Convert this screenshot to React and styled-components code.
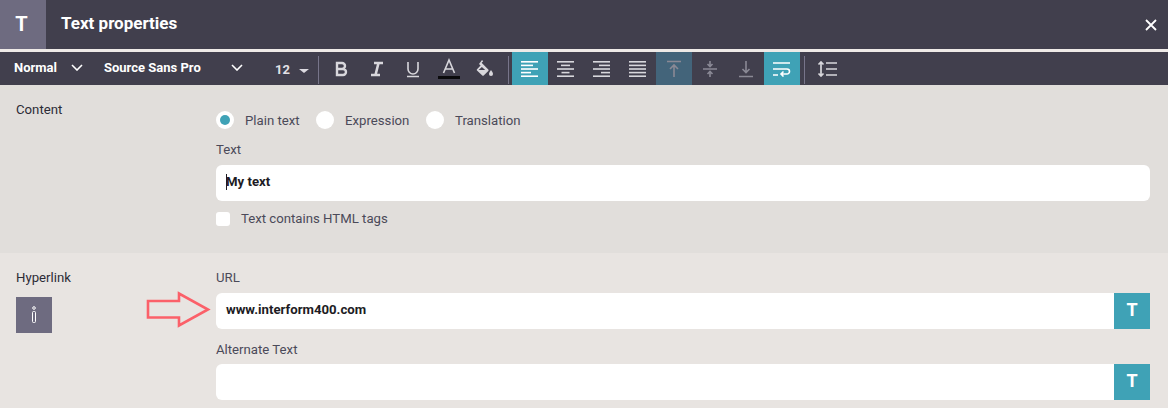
import styled, { createGlobalStyle } from "styled-components";

const GlobalStyle = createGlobalStyle`
  html, body {
    margin: 0;
    padding: 0;
    background: #e8e4e1;
  }
  body {
    font-family: Roboto, "Liberation Sans", sans-serif;
    overflow: hidden;
  }
`;

const Container = styled.div`
  width: 1168px;
  height: 408px;
  overflow: hidden;
  display: flex;
  flex-direction: column;
`;

const Header = styled.div`
  height: 49px;
  flex: none;
  display: flex;
  align-items: center;
  background: #413f4d;
  color: #fff;
  border-bottom: 3px solid #eeeae7;
`;

const HeaderBadge = styled.div`
  width: 46px;
  height: 49px;
  box-sizing: border-box;
  padding-right: 3px;
  padding-bottom: 2px;
  display: flex;
  align-items: center;
  justify-content: center;
  background: #6e6b80;
  font-size: 20px;
  font-weight: 700;
`;

const HeaderTitle = styled.div`
  margin-left: 15px;
  padding-bottom: 3px;
  font-size: 17px;
  font-weight: 700;
  flex: 1;
`;

const CloseButton = styled.div`
  width: 14px;
  height: 14px;
  margin-right: 10px;
  display: flex;
`;

const Toolbar = styled.div`
  height: 33px;
  flex: none;
  display: flex;
  align-items: stretch;
  background: #413f4d;
  color: #fff;
`;

const Select = styled.div`
  width: ${(props) => props.width}px;
  padding-left: ${(props) => props.pad}px;
  box-sizing: border-box;
  display: flex;
  align-items: center;
  justify-content: space-between;
  font-size: 13px;
  font-weight: 700;
  padding-bottom: 2px;
`;

const SizeSelect = styled.div`
  width: 75px;
  padding-left: 32px;
  padding-top: 1px;
  box-sizing: border-box;
  display: flex;
  align-items: center;
  gap: 9px;
  font-size: 13px;
  font-weight: 700;
  color: #e3e1e6;
`;

const Caret = styled.span`
  width: 0;
  height: 0;
  margin-top: 3px;
  border-left: 5px solid transparent;
  border-right: 5px solid transparent;
  border-top: 4px solid #dcdae0;
`;

const Divider = styled.div`
  width: 1px;
  flex: none;
  margin: 4px ${(props) => props.right}px 1px ${(props) => props.left}px;
  background: #77758a;
`;

const ToolButton = styled.div`
  width: 36px;
  flex: none;
  display: flex;
  align-items: center;
  justify-content: center;
  background: ${(props) =>
    props.active ? "#3fa2b6" : props.dim ? "#43647a" : "transparent"};
  color: ${(props) => (props.active ? "#fff" : props.muted ? "#8a8995" : "#d8d7dc")};

  svg {
    display: block;
  }
`;

const Section = styled.div`
  height: ${(props) => props.height}px;
  flex: none;
  display: grid;
  grid-template-columns: 216px 934px;
  background: ${(props) => props.bg};
`;

const SideColumn = styled.div`
  padding-left: 16px;
  padding-top: 17px;
`;

const SectionTitle = styled.div`
  font-size: 13.2px;
  line-height: 16px;
  color: #2c2b36;
`;

const InfoButton = styled.div`
  width: 36px;
  height: 36px;
  margin-top: 11px;
  display: flex;
  align-items: center;
  justify-content: center;
  background: #6e6b80;
`;

const FormColumn = styled.div`
  display: flex;
  flex-direction: column;
  padding-top: ${(props) => props.top}px;
`;

const RadioRow = styled.div`
  display: flex;
  align-items: center;
  height: 18px;
`;

const Radio = styled.span`
  width: 18px;
  height: 18px;
  border-radius: 50%;
  background: #fff;
  display: flex;
  align-items: center;
  justify-content: center;
  flex: none;

  &::after {
    content: "";
    width: 10px;
    height: 10px;
    border-radius: 50%;
    background: ${(props) => (props.checked ? "#3fa2b6" : "transparent")};
  }
`;

const RadioLabel = styled.span`
  font-size: 13.2px;
  color: #4b4a59;
  margin-left: 11px;
  width: ${(props) => props.width}px;
  flex: none;
`;

const FieldLabel = styled.div`
  font-size: 13.2px;
  line-height: 16px;
  color: #4b4a59;
  margin-top: ${(props) => props.top}px;
  margin-bottom: ${(props) => props.bottom}px;
`;

const Field = styled.div`
  height: 36px;
  flex: none;
  display: flex;
  align-items: stretch;
  background: #fff;
  border-radius: ${(props) => (props.addon ? "6px 0 0 6px" : "6px")};
`;

const FieldValue = styled.div`
  flex: 1;
  display: flex;
  align-items: center;
  padding-left: 10px;
  padding-bottom: 3px;
  font-size: 13.2px;
  font-weight: 700;
  color: #1d1c24;
`;

const Cursor = styled.span`
  width: 1px;
  height: 16px;
  margin-right: -1px;
  background: #1d1c24;
`;

const AddonButton = styled.div`
  width: 36px;
  padding-bottom: 3px;
  box-sizing: border-box;
  display: flex;
  align-items: center;
  justify-content: center;
  background: #3fa2b6;
  color: #fff;
  font-size: 18px;
  font-weight: 700;
`;

const CheckRow = styled.div`
  display: flex;
  align-items: center;
  margin-top: 10px;
`;

const Checkbox = styled.span`
  width: 14px;
  height: 14px;
  border-radius: 3px;
  background: #fff;
`;

const CheckLabel = styled.span`
  margin-left: 11px;
  font-size: 13.2px;
  color: #4b4a59;
`;

const Arrow = styled.svg`
  position: absolute;
  left: 146px;
  top: 291px;
`;

const Chevron = () => (
  <svg width="12" height="7" viewBox="0 0 12 7" fill="none" stroke="#fff" strokeWidth="1.6">
    <path d="M1 1l5 5 5-5" />
  </svg>
);

const Lines = ({ rows }) => (
  <svg width="18" height="18" viewBox="0 0 18 18" fill="currentColor">
    {rows.map(([x, w], i) => (
      <rect key={i} x={x} y={1 + i * 3.6} width={w} height="1.6" />
    ))}
  </svg>
);

const ALIGN_LEFT = [[0, 17], [0, 12], [0, 17], [0, 10], [0, 17]];
const ALIGN_CENTER = [[0, 17], [4, 9], [0, 17], [4.5, 8], [0, 17]];
const ALIGN_RIGHT = [[0, 17], [6, 11], [0, 17], [8, 9], [0, 17]];
const ALIGN_JUSTIFY = [[0, 17], [0, 17], [0, 17], [0, 17], [0, 17]];

const Icon = ({ children }) => (
  <svg width="18" height="18" viewBox="0 0 18 18" fill="none" stroke="currentColor" strokeWidth="1.6">
    {children}
  </svg>
);

const TextProperties = () => {
  return (
    <Container>
      <GlobalStyle />
      <Header>
        <HeaderBadge>T</HeaderBadge>
        <HeaderTitle>Text properties</HeaderTitle>
        <CloseButton>
          <svg width="14" height="14" viewBox="0 0 14 14" stroke="#fff" strokeWidth="1.8">
            <path d="M2 2l10 10M12 2L2 12" />
          </svg>
        </CloseButton>
      </Header>
      <Toolbar>
        <Select width={83} pad={14}>
          Normal
          <Chevron />
        </Select>
        <Select width={160} pad={21}>
          Source Sans Pro
          <Chevron />
        </Select>
        <SizeSelect>
          <span>12</span>
          <Caret />
        </SizeSelect>
        <Divider left={0} right={4} />
        <ToolButton>
          <Icon>
            <path strokeWidth="2.4" d="M5 3h5a3 3 0 0 1 0 6H5zM5 9h6a3 3 0 0 1 0 6H5zM5 2v14" />
          </Icon>
        </ToolButton>
        <ToolButton>
          <Icon>
            <path strokeWidth="2.6" d="M6 3h9M3 15h9M10.5 3l-3 12" />
          </Icon>
        </ToolButton>
        <ToolButton>
          <Icon>
            <path d="M4 2v7a5 5 0 0 0 10 0V2M3 16.5h12" />
          </Icon>
        </ToolButton>
        <ToolButton>
          <svg width="22" height="22" viewBox="0 0 22 22" fill="none" stroke="currentColor" strokeWidth="1.6">
            <path d="M5.5 15L11 2l5.5 13M7.2 11h7.6" />
            <rect x="0" y="18" width="22" height="3" fill="#0b0b0d" stroke="none" />
          </svg>
        </ToolButton>
        <ToolButton>
          <svg width="18" height="18" viewBox="0 0 18 18" fill="currentColor">
            <path d="M6 0l1.2 1.2-1.6 1.6 6.7 6.7a1 1 0 0 1 0 1.4l-4.6 4.6a1 1 0 0 1-1.4 0L1 10.6a1 1 0 0 1 0-1.4l3.6-3.6L3 4zM5.9 7L2.6 10h6.6z" />
            <path d="M15 10s2 2.6 2 4a2 2 0 0 1-4 0c0-1.4 2-4 2-4z" />
          </svg>
        </ToolButton>
        <Divider left={5} right={3} />
        <ToolButton active>
          <Lines rows={ALIGN_LEFT} />
        </ToolButton>
        <ToolButton>
          <Lines rows={ALIGN_CENTER} />
        </ToolButton>
        <ToolButton>
          <Lines rows={ALIGN_RIGHT} />
        </ToolButton>
        <ToolButton>
          <Lines rows={ALIGN_JUSTIFY} />
        </ToolButton>
        <ToolButton dim muted>
          <Icon>
            <path d="M2 1.5h14M9 17V5M5 9l4-4 4 4" />
          </Icon>
        </ToolButton>
        <ToolButton muted>
          <Icon>
            <path d="M2 9h14M9 1v5.5M6.5 4L9 6.5 11.5 4M9 17v-5.5M6.5 14L9 11.5 11.5 14" />
          </Icon>
        </ToolButton>
        <ToolButton muted>
          <Icon>
            <path d="M2 16.5h14M9 1v11.5M5.5 9L9 12.5 12.5 9" />
          </Icon>
        </ToolButton>
        <ToolButton active>
          <svg width="18" height="16" viewBox="0 0 18 16" fill="none" stroke="currentColor" strokeWidth="1.6">
            <path d="M0 2h17M0 8h14a2.5 2.5 0 0 1 0 5H8M10.5 10.5L8 13l2.5 2.5M0 14h5" />
          </svg>
        </ToolButton>
        <Divider left={4} right={4} />
        <ToolButton>
          <svg width="20" height="16" viewBox="0 0 20 16" fill="none" stroke="currentColor" strokeWidth="1.7">
            <path d="M4 1v14M1.5 3.5L4 1l2.5 2.5M1.5 12.5L4 15l2.5-2.5M9 2h11M9 8h11M9 14h11" />
          </svg>
        </ToolButton>
      </Toolbar>
      <Section height={168} bg="#e1dedb">
        <SideColumn>
          <SectionTitle>Content</SectionTitle>
        </SideColumn>
        <FormColumn top={26}>
          <RadioRow>
            <Radio checked />
            <RadioLabel width={71}>Plain text</RadioLabel>
            <Radio />
            <RadioLabel width={81}>Expression</RadioLabel>
            <Radio />
            <RadioLabel>Translation</RadioLabel>
          </RadioRow>
          <FieldLabel top={13} bottom={7}>Text</FieldLabel>
          <Field>
            <FieldValue>
              <Cursor />
              My text
            </FieldValue>
          </Field>
          <CheckRow>
            <Checkbox />
            <CheckLabel>Text contains HTML tags</CheckLabel>
          </CheckRow>
        </FormColumn>
      </Section>
      <Section height={155} bg="#e8e4e1">
        <SideColumn>
          <SectionTitle>Hyperlink</SectionTitle>
          <InfoButton>
            <svg width="6" height="18" viewBox="0 0 6 18" fill="none" stroke="#fff" strokeWidth="1">
              <circle cx="3" cy="2" r="1.3" />
              <rect x="1.5" y="5.5" width="3" height="11" rx="1" />
            </svg>
          </InfoButton>
        </SideColumn>
        <FormColumn top={17}>
          <FieldLabel top={0} bottom={7}>URL</FieldLabel>
          <Field addon>
            <FieldValue>www.interform400.com</FieldValue>
            <AddonButton>T</AddonButton>
          </Field>
          <FieldLabel top={13} bottom={6}>Alternate Text</FieldLabel>
          <Field addon>
            <FieldValue />
            <AddonButton>T</AddonButton>
          </Field>
        </FormColumn>
      </Section>
      <Arrow width="66" height="38" viewBox="0 0 66 38" fill="none" stroke="#fb6069" strokeWidth="2.6">
        <path d="M2 10h31V2.5L62 18.5 33 34.5v-8H2z" />
      </Arrow>
    </Container>
  );
};

export default TextProperties;
